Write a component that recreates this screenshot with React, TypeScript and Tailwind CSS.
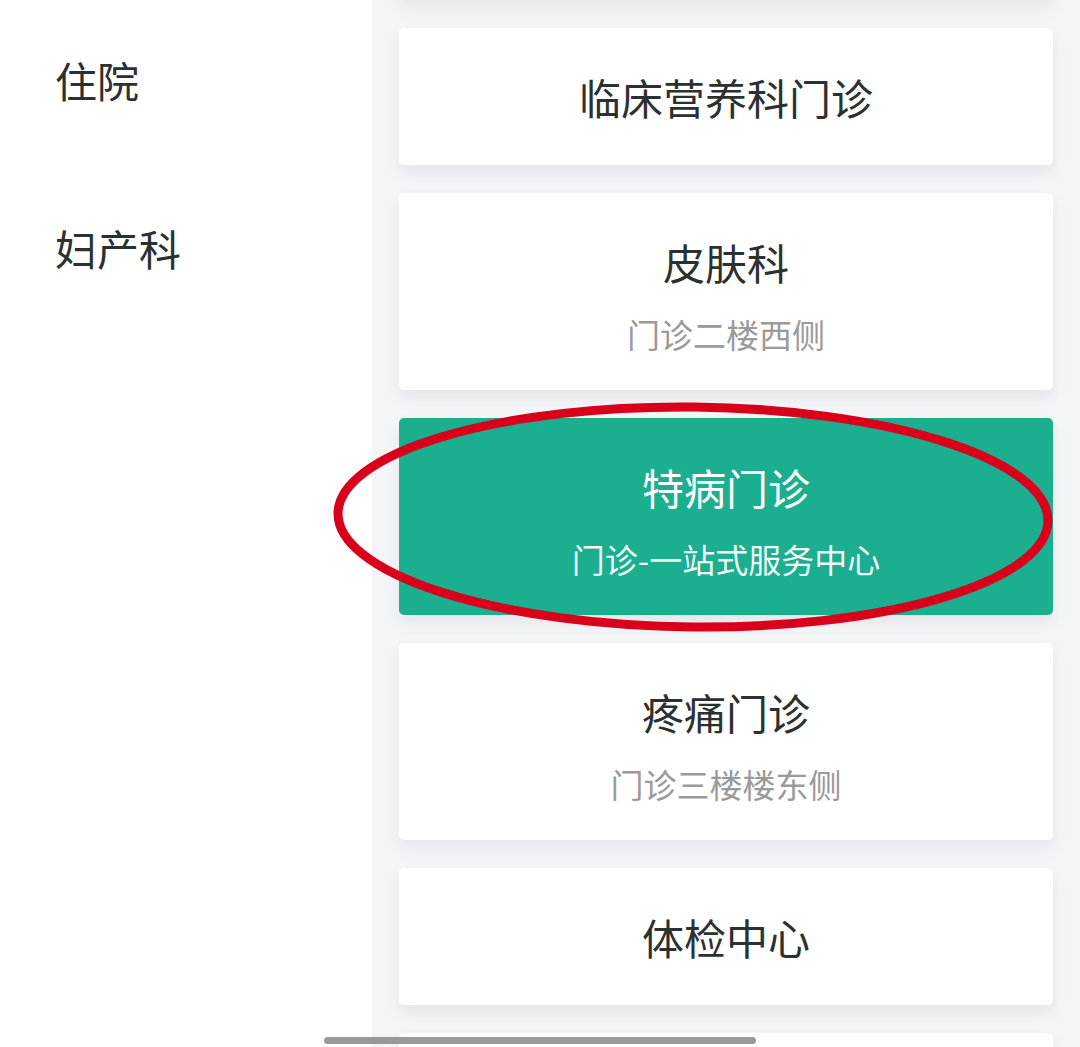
import React from "react";

type Dept = { name: string; place?: string; active?: boolean };

const menu = ["住院", "妇产科"];

const depts: Dept[] = [
  { name: "内分泌科门诊" },
  { name: "临床营养科门诊" },
  { name: "皮肤科", place: "门诊二楼西侧" },
  { name: "特病门诊", place: "门诊-一站式服务中心", active: true },
  { name: "疼痛门诊", place: "门诊三楼楼东侧" },
  { name: "体检中心" },
  { name: "康复医学科" },
];

function DeptCard({ dept, first }: { dept: Dept; first?: boolean }) {
  return (
    <div
      className={`shrink-0 rounded-[5px] py-[38.5px] text-center shadow-[0_8px_14px_rgba(120,130,160,0.12)] ${
        dept.active ? "bg-[#1bae8f] text-white" : "bg-white text-[#2b3130]"
      } ${first ? "mt-[-137px]" : ""}`}
    >
      <p className="text-[42px] leading-[60px]">{dept.name}</p>
      {dept.place ? (
        <p
          className={`mt-[24px] text-[33px] leading-[36px] ${
            dept.active ? "text-white/95" : "text-[#9a9a9a]"
          }`}
        >
          {dept.place}
        </p>
      ) : null}
    </div>
  );
}

export default function App() {
  return (
    <div
      className="relative flex h-[1047px] w-full overflow-hidden bg-white"
      style={{ fontFamily: '"Noto Sans CJK SC", "Noto Sans", sans-serif' }}
    >
      <aside className="w-[372px] shrink-0 bg-white pl-[55px]">
        <div className="mt-[-5px] flex flex-col">
          {menu.map((item) => (
            <div key={item} className="flex h-[168px] items-center text-[42px] text-[#2b3130]">
              {item}
            </div>
          ))}
        </div>
      </aside>

      <main className="flex flex-1 flex-col gap-[28px] bg-[#f4f5f7] pl-[27px] pr-[27px]">
        {depts.map((dept, i) => (
          <DeptCard key={dept.name} dept={dept} first={i === 0} />
        ))}
      </main>

      {/* scroll indicator */}
      <div className="absolute left-[324px] top-[1037px] h-[7px] w-[432px] rounded-full bg-[#999999]" />

      {/* red annotation ring */}
      <svg className="pointer-events-none absolute left-0 top-0" width="1080" height="1047">
        <ellipse
          cx="693"
          cy="517"
          rx="355"
          ry="110"
          fill="none"
          stroke="#d9001b"
          strokeWidth="9"
          transform="rotate(0.6 693 517)"
        />
      </svg>
    </div>
  );
}
